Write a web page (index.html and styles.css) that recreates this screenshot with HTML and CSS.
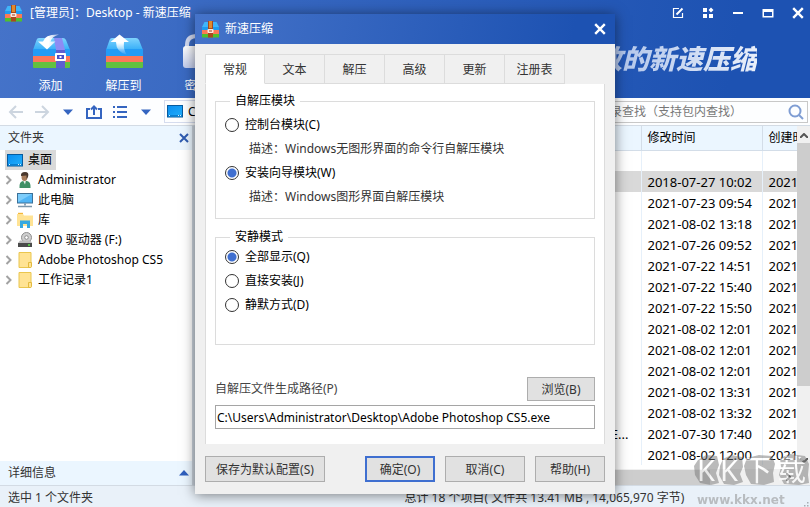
FILE: index.html
```html
<!DOCTYPE html>
<html lang="zh-CN">
<head>
  <meta charset="UTF-8">
  <title>新速压缩</title>
  <link rel="stylesheet" href="styles.css">
</head>
<body>
  <!-- shared icons -->
  <svg class="defs" aria-hidden="true">
    <defs>
      <linearGradient id="lid" x1="0" y1="0" x2="0" y2="1">
        <stop offset="0" stop-color="#7fd3fd"/>
        <stop offset="1" stop-color="#35aef8"/>
      </linearGradient>
      <linearGradient id="screen" x1="0" y1="0" x2="1" y2="1">
        <stop offset="0" stop-color="#0a8df0"/>
        <stop offset="1" stop-color="#22b0fb"/>
      </linearGradient>
      <linearGradient id="arrow" x1="0" y1="0" x2="1" y2="0">
        <stop offset="0.5" stop-color="#fff"/>
        <stop offset="1" stop-color="#fff" stop-opacity="0.5"/>
      </linearGradient>
      <linearGradient id="fade" x1="0" y1="0" x2="0" y2="1">
        <stop offset="0.4" stop-color="#fff"/>
        <stop offset="1" stop-color="#fff" stop-opacity="0"/>
      </linearGradient>
      <linearGradient id="lock" x1="0" y1="0" x2="0" y2="1">
        <stop offset="0" stop-color="#fff"/>
        <stop offset="1" stop-color="#c3cdec"/>
      </linearGradient>
    </defs>
    <symbol id="app" viewBox="0 0 17 17">
      <path d="M2.500 1h12L17 6v2H0V6z" fill="#3fb5fa"/>
      <path d="M0 6h17v3H0z" fill="#1e9bf0"/>
      <path d="M0 9h17v4H0z" fill="#fb7a55"/>
      <path d="M0 13h17v3.500H0z" fill="#4fc02c"/>
      <path d="M6 0h5v16.500H6z" fill="#a84a1c"/>
      <path d="M7 0h3v7H7z" fill="#e08a2c"/>
      <rect x="5.500" y="8" width="6" height="4" rx="1" fill="#fbe9e0"/>
      <path d="M7 9.500h3v1H7z" fill="#a23c18"/>
    </symbol>
    <symbol id="box" viewBox="0 0 38 36">
      <path d="M7 4h24q2 0 3 2L38 16H1L4.500 6Q5 4 7 4z" fill="url(#lid)"/>
      <path d="M1 15h37v7H1z" fill="#239cf6"/>
      <path d="M1 22h37v6H1z" fill="#fd775a"/>
      <path d="M1 28h37v5q0 1-1 1H2q-1 0-1-1z" fill="#62c13f"/>
    </symbol>
    <symbol id="desktop" viewBox="0 0 16 13">
      <rect x="0.500" y="0.500" width="15" height="11.500" fill="url(#screen)" stroke="#075b9e"/>
      <path d="M1 10.500h14" stroke="#0a7fd0"/>
      <path d="M2 10.500h1M11 10.500h1M13 10.500h1" stroke="#d9f1ff"/>
    </symbol>
    <symbol id="folder" viewBox="0 0 16 16">
      <path d="M2 0.500h12V15.500H2z" fill="#ffe394" stroke="#eac64f"/>
      <path d="M11.500 15.500V10.500h3v4l-1 1z" fill="#ffe394" stroke="#e3ba3f"/>
    </symbol>
    <symbol id="close" viewBox="0 0 10 10">
      <path d="M1 1l8 8M9 1l-8 8" fill="none" stroke="currentColor" stroke-width="2"/>
    </symbol>
    <symbol id="chevron" viewBox="0 0 6 10">
      <path d="M1 1l4 4-4 4" fill="none" stroke="#a2a2a2" stroke-width="2"/>
    </symbol>
  </svg>

  <div class="app">
    <header class="header">
      <div class="titlebar">
        <svg class="logo"><use href="#app"/></svg>
        <span class="title">[管理员]：Desktop - 新速压缩</span>
        <div class="window-buttons">
          <button aria-label="反馈"><svg width="12" height="12" viewBox="0 0 12 12" fill="none" stroke="#fff"><path d="M7 1.500H1.500v9h9V6" stroke-width="1.200"/><path d="M4.500 7.500l6-6" stroke-width="2"/></svg></button>
          <button aria-label="菜单"><svg width="12" height="12" viewBox="0 0 12 12" fill="#fff"><path d="M1 1h4v4H1zM1 7h4v4H1zM7 7h4v4H7zM9 .5L11.500 3 9 5.500 6.500 3z"/></svg></button>
          <button aria-label="最小化"><svg width="12" height="12" viewBox="0 0 12 12"><path d="M1 6h10" stroke="#fff" stroke-width="2"/></svg></button>
          <button aria-label="最大化"><svg width="12" height="12" viewBox="0 0 12 12"><path d="M0.500 2h11v8.500h-11zM2 5v4h8V5z" fill="#fff" fill-rule="evenodd"/></svg></button>
          <button aria-label="关闭"><svg width="12" height="12"><use href="#close"/></svg></button>
        </div>
      </div>
      <div class="toolbar">
        <button class="tool">
          <svg width="38" height="36" viewBox="0 0 38 36">
            <use href="#box"/>
            <path d="M24 16h9v18h-9z" fill="#5e5fd0"/>
            <path d="M22 4h8l3 12h-9z" fill="#8d8cf4"/>
            <rect x="23" y="19" width="11" height="8" rx="1" fill="#fff"/>
            <path d="M25 21h7v4h-7z" fill="#4a50c8"/>
            <path d="M27.500 22h2v2h-2z" fill="#fff"/>
            <path d="M27 .5Q13 0 11 7.500H6l9 8 8.500-8H18.500q1.500-5 8.500-7z" fill="url(#arrow)"/>
          </svg>
          <span>添加</span>
        </button>
        <button class="tool">
          <svg width="38" height="36" viewBox="0 0 38 36">
            <use href="#box"/>
            <path d="M14.500 0.500L24 8h-5q-1 8 3 13Q11 18 11 8H5.500z" fill="url(#fade)"/>
          </svg>
          <span>解压到</span>
        </button>
        <button class="tool">
          <svg width="38" height="36" viewBox="0 0 38 36">
            <path d="M9 16V11q0-9 10-9t10 9v5" fill="none" stroke="#d4dcf3" stroke-width="4"/>
            <rect x="5" y="12" width="28" height="22" rx="3" fill="url(#lock)"/>
          </svg>
          <span>密码</span>
        </button>
        <div class="slogan">放的新速压缩</div>
      </div>
    </header>

    <nav class="navbar">
      <button aria-label="后退"><svg width="16" height="14" viewBox="0 0 16 14" fill="none" stroke="#ccd5df" stroke-width="2"><path d="M15 7H2M8 1L2 7l6 6"/></svg></button>
      <button aria-label="前进"><svg width="16" height="14" viewBox="0 0 16 14" fill="none" stroke="#ccd5df" stroke-width="2"><path d="M1 7h13M8 1l6 6-6 6"/></svg></button>
      <button aria-label="历史"><svg width="16" height="14" viewBox="0 0 16 14"><path d="M3 4.500h10L8 10z" fill="#3565c0"/></svg></button>
      <button aria-label="上一级"><svg width="16" height="14" viewBox="0 0 16 14" fill="none" stroke="#3565c0" stroke-width="2"><path d="M4 4H1v9h14V4h-3M8 10V2M5 4.500L8 1.500l3 3"/></svg></button>
      <button aria-label="视图"><svg width="16" height="14" viewBox="0 0 16 14" stroke="#3565c0" stroke-width="2"><path d="M1 2h2M5 2h10M1 7h2M5 7h10M1 12h2M5 12h10"/></svg></button>
      <button aria-label="视图选项"><svg width="16" height="14" viewBox="0 0 16 14"><path d="M3 4.500h10L8 10z" fill="#3565c0"/></svg></button>
      <div class="address">
        <svg width="16" height="13"><use href="#desktop"/></svg>
        <input type="text" aria-label="地址" value="C:\Users\Administrator\Desktop">
      </div>
      <div class="search">
        <input type="text" aria-label="查找" placeholder="在当前目录查找（支持包内查找）">
        <svg width="16" height="16" viewBox="0 0 16 16" fill="none" stroke="#7f9dd3" stroke-width="2"><circle cx="7" cy="7" r="5.500"/><path d="M11 11l4 4"/></svg>
      </div>
    </nav>

    <main class="main">
      <aside class="sidebar">
        <div class="side-bar">
          <span>文件夹</span>
          <button aria-label="关闭"><svg width="10" height="10"><use href="#close"/></svg></button>
        </div>
        <ul class="tree">
          <li class="root"><svg width="16" height="13"><use href="#desktop"/></svg><span>桌面</span></li>
          <li>
            <svg class="chevron"><use href="#chevron"/></svg>
            <svg width="16" height="16" viewBox="0 0 16 16"><path d="M2.500 16Q2 9.500 6 9h4q4 .5 3.500 7z" fill="#3f8f66"/><path d="M6 8.500h3l-1 4z" fill="#e9efec"/><ellipse cx="7.500" cy="5" rx="3" ry="4" fill="#a77c5b"/><path d="M4 4Q3.500 0 8 0t3 5L9.500 7V3.500z" fill="#4a382d"/></svg>
            <span>Administrator</span>
          </li>
          <li>
            <svg class="chevron"><use href="#chevron"/></svg>
            <svg width="16" height="16" viewBox="0 0 16 16"><rect x=".5" y="1.500" width="15" height="9.500" fill="#51b5f5" stroke="#3c7198"/><path d="M1 2h14L1 10z" fill="#7dcdfb"/><path d="M8 11v2.500" stroke="#8aa2b5" stroke-width="2"/><path d="M1 14.500h14" stroke="#7b96aa" stroke-width="1.500"/></svg>
            <span>此电脑</span>
          </li>
          <li>
            <svg class="chevron"><use href="#chevron"/></svg>
            <svg width="16" height="16" viewBox="0 0 16 16"><path d="M0 2h6l1 1.500h9V14H0z" fill="#ffe394"/><path d="M1 2V.8h5V2" fill="#f4b73c"/><path d="M3 16V8.500h10V16h-3v-4H6v4z" fill="#36a9e1"/></svg>
            <span>库</span>
          </li>
          <li>
            <svg class="chevron"><use href="#chevron"/></svg>
            <svg width="16" height="16" viewBox="0 0 16 16"><circle cx="9.500" cy="5.500" r="5" fill="#cfcfcf" stroke="#8e8e8e"/><circle cx="9.500" cy="5.500" r="1.800" fill="#fff" stroke="#8e8e8e"/><path d="M3 8.500L1 11h14l-1.500-2.500z" fill="#bdbdbd"/><path d="M1 11h14v4H1z" fill="#4b4b4b"/><path d="M11 13h2" stroke="#5bea4a" stroke-width="1.500"/></svg>
            <span>DVD 驱动器 (F:)</span>
          </li>
          <li><svg class="chevron"><use href="#chevron"/></svg><svg width="16" height="16"><use href="#folder"/></svg><span>Adobe Photoshop CS5</span></li>
          <li><svg class="chevron"><use href="#chevron"/></svg><svg width="16" height="16"><use href="#folder"/></svg><span>工作记录1</span></li>
        </ul>
        <div class="side-bar">
          <span>详细信息</span>
          <button aria-label="展开"><svg width="10" height="6" viewBox="0 0 10 6"><path d="M0 5.500h10L5 0z" fill="#2f5fbe"/></svg></button>
        </div>
      </aside>

      <section class="files">
        <div class="list">
          <table>
            <colgroup><col><col class="col-date"><col class="col-date"></colgroup>
            <thead>
              <tr><th></th><th>修改时间</th><th>创建时间</th></tr>
            </thead>
            <tbody>
              <tr><td></td><td></td><td></td></tr>
              <tr class="selected"><td></td><td>2018-07-27 10:02</td><td>2021</td></tr>
              <tr><td></td><td>2021-07-23 09:54</td><td>2021</td></tr>
              <tr><td></td><td>2021-08-02 13:18</td><td>2021</td></tr>
              <tr><td></td><td>2021-07-26 09:52</td><td>2021</td></tr>
              <tr><td></td><td>2021-07-22 14:51</td><td>2021</td></tr>
              <tr><td></td><td>2021-07-22 15:40</td><td>2021</td></tr>
              <tr><td></td><td>2021-07-22 15:50</td><td>2021</td></tr>
              <tr><td></td><td>2021-08-02 12:01</td><td>2021</td></tr>
              <tr><td></td><td>2021-08-02 12:01</td><td>2021</td></tr>
              <tr><td></td><td>2021-08-02 12:01</td><td>2021</td></tr>
              <tr><td></td><td>2021-08-02 13:31</td><td>2021</td></tr>
              <tr><td></td><td>2021-08-02 13:32</td><td>2021</td></tr>
              <tr><td class="type">E...</td><td>2021-07-30 17:40</td><td>2021</td></tr>
              <tr><td></td><td>2021-08-02 12:00</td><td>2021</td></tr>
            </tbody>
          </table>
        </div>
        <div class="vscroll">
          <svg width="8" height="5" viewBox="0 0 8 5" fill="none" stroke="#555" stroke-width="2"><path d="M0 5l4-4 4 4"/></svg>
          <div class="thumb"></div>
          <svg width="8" height="5" viewBox="0 0 8 5" fill="none" stroke="#555" stroke-width="2"><path d="M0 0l4 4 4-4"/></svg>
        </div>
        <div class="hscroll">
          <div class="thumb"></div>
          <svg width="5" height="8" viewBox="0 0 5 8" fill="none" stroke="#555" stroke-width="2"><path d="M0 0l4 4-4 4"/></svg>
        </div>
      </section>
    </main>

    <footer class="status">
      <span>选中 1 个文件夹</span>
      <span>总计 18 个项目( 文件共 13.41 MB , 14,065,970 字节)</span>
      <svg class="grip" width="8" height="8" viewBox="0 0 8 8" fill="#a7adb3"><path d="M6 0h1.500v1.500H6zM3 3h1.500v1.500H3zM6 3h1.500v1.500H6zM0 6h1.500v1.500H0zM3 6h1.500v1.500H3zM6 6h1.500v1.500H6z"/></svg>
    </footer>
  </div>

  <div class="watermark">
    <svg width="116" height="32" viewBox="0 0 116 32" fill="#777">
      <path d="M4 6L12 1l11 1 2 9-3 8 3 10-8 2-11-2-5-8-1-9z"/>
      <path d="M29 5l8-4 11 2 1 10-3 7 3 8-9 3-10-1-5-9 1-9z"/>
      <path d="M53 4l12-3 13 1 3 8-2 9 1 9-10 3-13-1-5-9-2-9z"/>
      <path d="M86 4l10-4 15 2 4 8-1 11 1 8-10 2-15-1-5-9 2-8z"/>
    </svg>
    <strong><b>K</b><b>K</b><b>下</b><b>载</b></strong>
    <span>www.kkx.net</span>
  </div>

  <div class="overlay">
    <form class="dialog">
      <div class="dialog-title">
        <svg class="logo"><use href="#app"/></svg>
        <span class="title">新速压缩</span>
        <button type="button" aria-label="关闭"><svg width="12" height="12"><use href="#close"/></svg></button>
      </div>
      <div class="dialog-body">
        <div class="tabs">
          <button type="button" class="active">常规</button>
          <button type="button">文本</button>
          <button type="button">解压</button>
          <button type="button">高级</button>
          <button type="button">更新</button>
          <button type="button">注册表</button>
        </div>
        <div class="panel">
          <fieldset class="module">
            <legend>自解压模块</legend>
            <label><input type="radio" name="module">控制台模块(C)</label>
            <p>描述：Windows无图形界面的命令行自解压模块</p>
            <label><input type="radio" name="module" checked>安装向导模块(W)</label>
            <p>描述：Windows图形界面自解压模块</p>
          </fieldset>
          <fieldset class="silent">
            <legend>安静模式</legend>
            <label><input type="radio" name="silent" checked>全部显示(Q)</label>
            <label><input type="radio" name="silent">直接安装(J)</label>
            <label><input type="radio" name="silent">静默方式(D)</label>
          </fieldset>
          <div class="path-row">
            <label for="path">自解压文件生成路径(P)</label>
            <button type="button" class="btn browse">浏览(B)</button>
          </div>
          <input class="path" id="path" type="text" value="C:\Users\Administrator\Desktop\Adobe Photoshop CS5.exe">
        </div>
        <div class="actions">
          <button type="button" class="btn save">保存为默认配置(S)</button>
          <button type="button" class="btn ok">确定(O)</button>
          <button type="button" class="btn cancel">取消(C)</button>
          <button type="button" class="btn help">帮助(H)</button>
        </div>
      </div>
    </form>
  </div>
</body>
</html>
```

FILE: styles.css
```css
* {
  box-sizing: border-box;
}
body, button, input {
  font-family: "Noto Sans", "Noto Sans CJK SC", sans-serif;
  font-size: 12px;
  color: #000;
}
body {
  margin: 0;
  line-height: 20px;
}
button {
  background: none;
  border: 0;
  padding: 0;
}
svg {
  display: block;
  flex: none;
}
.defs {
  position: absolute;
  width: 0;
  height: 0;
}
.app {
  display: flex;
  flex-direction: column;
  height: 100vh;
  overflow: hidden;
}
.logo {
  width: 17px;
  height: 17px;
}
.title {
  flex: 1;
  color: #fff;
}

/* header */
.header {
  height: 98px;
  flex: none;
  background: linear-gradient(100deg, #4573c9, #1d52b2 90%);
}
.titlebar {
  display: flex;
  align-items: center;
  gap: 8px;
  height: 26px;
  padding: 0 6px 0 5px;
}
.window-buttons {
  display: flex;
  gap: 18px;
}
.window-buttons button {
  color: #fff;
}
.toolbar {
  display: flex;
  padding: 8px 53px 0 14px;
}
.tool {
  width: 73px;
  display: flex;
  flex-direction: column;
  align-items: center;
  gap: 6px;
  color: #fff;
  line-height: 20px;
}
.slogan {
  margin-left: auto;
  padding-top: 5px;
  font-size: 27px;
  line-height: 40px;
  font-weight: 900;
  font-style: italic;
  background: linear-gradient(90deg, #a9bfe8, #e9effa);
  -webkit-background-clip: text;
  background-clip: text;
  color: transparent;
}

/* navigation */
.navbar {
  display: flex;
  align-items: center;
  gap: 10px;
  height: 28px;
  flex: none;
  padding: 0 2px 0 8px;
  background: #fdfeff;
  border-bottom: 1px solid #d3dbe4;
}
.address {
  flex: 1;
  display: flex;
  align-items: center;
  gap: 5px;
  height: 23px;
  padding-left: 2px;
  border: 1px solid #d5dcee;
}
.address input, .search input {
  flex: 1;
  min-width: 0;
  padding: 0;
  border: 0;
  background: none;
  outline: none;
}
.search {
  display: flex;
  align-items: center;
  width: 254px;
  height: 22px;
  padding: 0 3px 0 7px;
  border: 1px solid #c8c8c8;
}
.search input::placeholder {
  color: #777;
}

/* main area */
.main {
  flex: 1;
  display: flex;
  min-height: 0;
}
.sidebar {
  display: flex;
  flex-direction: column;
  width: 195px;
  border-right: 3px solid #ccd5df;
  background: #fff;
}
.side-bar {
  display: flex;
  align-items: center;
  justify-content: space-between;
  height: 24px;
  padding: 0 3px 0 8px;
  background: #ebf6ff;
  color: #333;
}
.side-bar button {
  color: #2f5bb0;
}
.tree {
  flex: 1;
  margin: 0;
  padding: 0 5px;
  list-style: none;
}
.tree li {
  display: flex;
  align-items: center;
  gap: 5px;
  height: 20px;
}
.tree .root {
  width: 51px;
  padding-left: 2px;
  background: #d9d9d9;
}
.chevron {
  width: 7px;
  height: 10px;
}
.files {
  flex: 1;
  min-width: 0;
  display: grid;
  grid-template-columns: 1fr 13px;
  grid-template-rows: 1fr 16px;
  background: #f0f0f0;
}
.list {
  overflow: hidden;
  background: #fff;
}
table {
  width: calc(100% + 86px);
  table-layout: fixed;
  border-collapse: collapse;
}
.col-date {
  width: 121px;
}
th, td {
  height: 21px;
  padding: 0 6px;
  border-left: 1px solid #e6f0fa;
  font-weight: normal;
  text-align: left;
  white-space: nowrap;
  line-height: 20px;
}
td {
  font-size: 13px;
}
th {
  height: 24px;
  background: #ebf6ff;
  border-left: 1px solid #d3dde8;
  border-bottom: 1px solid #d3dde8;
}
.selected {
  background: #d9d9d9;
}
.type {
  padding-right: 12px;
  text-align: right;
}
.vscroll, .hscroll {
  display: flex;
  align-items: center;
  justify-content: space-between;
}
.vscroll {
  flex-direction: column;
  padding: 7px 0 6px;
}
.vscroll .thumb {
  flex: 1;
  width: 13px;
  margin: 5px 0 72px;
  background: #cdcdcd;
}
.hscroll {
  grid-column: 1 / 3;
  padding-right: 19px;
}
.hscroll .thumb {
  flex: 1;
  height: 15px;
  margin-right: 76px;
  background: #cdcdcd;
}

.status {
  display: grid;
  grid-template-columns: 1fr 1fr 8px;
  height: 22px;
  flex: none;
  padding: 0 1px 0 8px;
  border-top: 1px solid #d3dbe4;
  background: #e9f1f9;
  color: #333;
  line-height: 24px;
  white-space: nowrap;
}
.status .grip {
  align-self: end;
}

.watermark {
  position: absolute;
  right: 0;
  bottom: 0;
  width: 116px;
  height: 53px;
  opacity: 0.5;
}
.watermark strong {
  position: absolute;
  inset: 0 4px auto 3px;
  display: flex;
  justify-content: space-between;
  font-size: 29px;
  line-height: 32px;
  color: #fff;
}
.watermark b {
  font-weight: normal;
}
.watermark span {
  display: block;
  padding: 6px 0 0 3px;
  font: bold 12px/16px "DejaVu Sans", sans-serif;
  color: #888;
}

/* dialog */
.overlay {
  position: absolute;
  inset: 0;
  display: flex;
  justify-content: center;
  align-items: flex-start;
  padding-top: 14px;
}
.dialog {
  width: 420px;
  background: #f0f0f0;
  box-shadow: 0 1px 12px rgba(0,0,0,0.5);
}
.dialog-title {
  display: flex;
  align-items: center;
  gap: 6px;
  height: 30px;
  padding: 0 9px 0 7px;
  background: linear-gradient(100deg, #4573c9, #1d52b2 90%);
}
.dialog-title button {
  color: #fff;
}
.dialog-body {
  padding: 10px 10px 12px;
}
.tabs {
  display: flex;
}
.tabs button {
  width: 60px;
  height: 30px;
  border: 1px solid #dcdcdc;
  border-left: 0;
  color: #333;
}
.tabs .active {
  border-left: 1px solid #dcdcdc;
  border-bottom-color: #fff;
  background: #fff;
}
.panel {
  padding: 9px 9px 15px;
  border: 1px solid #dcdcdc;
  border-width: 0 1px;
  background: #fff;
}
fieldset {
  margin: 0 0 10px;
  border: 1px solid #dcdcdc;
}
legend {
  margin-left: 5px;
  padding: 0 5px;
  line-height: 16px;
}
.module {
  padding: 4px 9px 9px;
}
.silent {
  margin-bottom: 32px;
  padding: 0 9px 27px;
}
fieldset label {
  display: flex;
  align-items: center;
  gap: 6px;
  height: 24px;
}
fieldset p {
  margin: 0;
  padding-left: 24px;
  line-height: 24px;
  color: #333;
}
input[type="radio"] {
  appearance: none;
  width: 14px;
  height: 14px;
  margin: 0;
  border: 1px solid #333;
  border-radius: 50%;
  background: #fff;
}
input[type="radio"]:checked {
  background: radial-gradient(circle, #3f6fd0 4px, #fff 5px);
}
.path-row {
  display: flex;
  align-items: center;
  justify-content: space-between;
  margin-bottom: 4px;
  color: #444;
}
.path {
  display: block;
  width: 100%;
  height: 24px;
  padding: 0 1px;
  border: 1px solid #a5a5a5;
}
.actions {
  display: flex;
  gap: 10px;
  padding-top: 12px;
}
.btn {
  height: 26px;
  border: 1px solid #adadad;
  background: #e1e1e1;
  color: #333;
}
.browse {
  width: 68px;
  height: 24px;
}
.save {
  width: 120px;
  margin-right: auto;
}
.ok, .help {
  width: 70px;
}
.ok {
  border: 2px solid #3f6fd0;
}
.cancel {
  width: 80px;
}
```
